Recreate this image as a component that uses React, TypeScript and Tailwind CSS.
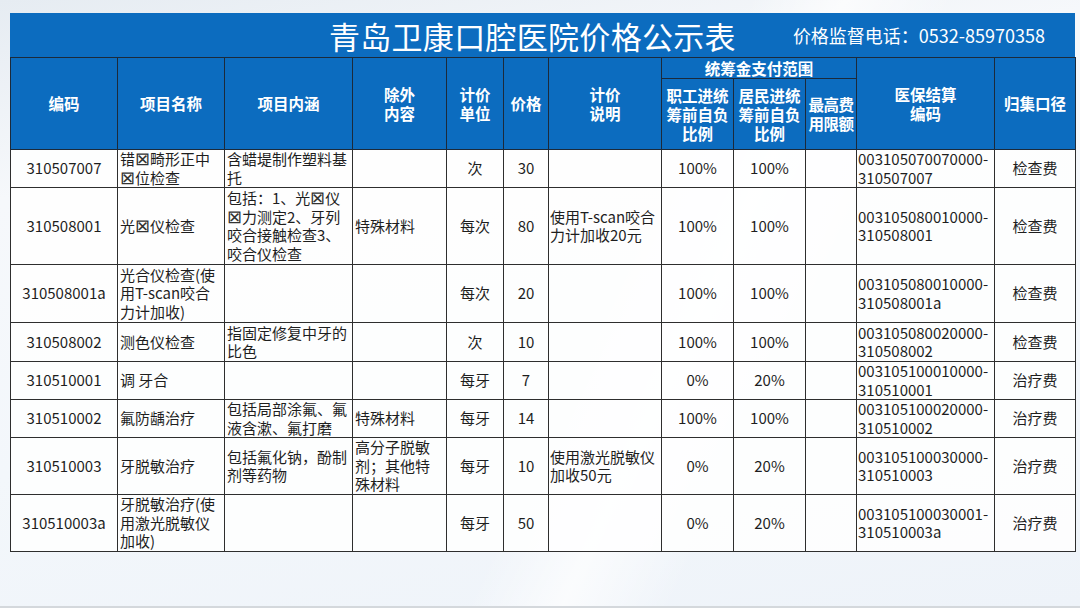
import React from 'react'

const colWidths = [107, 107, 128, 94, 57, 45, 113, 72, 72, 51, 138, 81]

type Row = {
  h: number
  code: string
  name: string[]
  content: string[]
  exclude: string[]
  unit: string
  price: string
  note: string[]
  staff: string
  resident: string
  cap: string
  ins: string[]
  cat: string
}

const rows: Row[] = [
  { h: 37, code: '310507007', name: ['错⊠畸形正中', '⊠位检查'], content: ['含蜡堤制作塑料基', '托'], exclude: [], unit: '次', price: '30', note: [], staff: '100%', resident: '100%', cap: '', ins: ['003105070070000-', '310507007'], cat: '检查费' },
  { h: 77, code: '310508001', name: ['光⊠仪检查'], content: ['包括：1、光⊠仪', '⊠力测定2、牙列', '咬合接触检查3、', '咬合仪检查'], exclude: ['特殊材料'], unit: '每次', price: '80', note: ['使用T-scan咬合', '力计加收20元'], staff: '100%', resident: '100%', cap: '', ins: ['003105080010000-', '310508001'], cat: '检查费' },
  { h: 58, code: '310508001a', name: ['光合仪检查(使', '用T-scan咬合', '力计加收)'], content: [], exclude: [], unit: '每次', price: '20', note: [], staff: '100%', resident: '100%', cap: '', ins: ['003105080010000-', '310508001a'], cat: '检查费' },
  { h: 39, code: '310508002', name: ['测色仪检查'], content: ['指固定修复中牙的', '比色'], exclude: [], unit: '次', price: '10', note: [], staff: '100%', resident: '100%', cap: '', ins: ['003105080020000-', '310508002'], cat: '检查费' },
  { h: 38, code: '310510001', name: ['调 牙合'], content: [], exclude: [], unit: '每牙', price: '7', note: [], staff: '0%', resident: '20%', cap: '', ins: ['003105100010000-', '310510001'], cat: '治疗费' },
  { h: 38, code: '310510002', name: ['氟防龋治疗'], content: ['包括局部涂氟、氟', '液含漱、氟打磨'], exclude: ['特殊材料'], unit: '每牙', price: '14', note: [], staff: '100%', resident: '100%', cap: '', ins: ['003105100020000-', '310510002'], cat: '治疗费' },
  { h: 57, code: '310510003', name: ['牙脱敏治疗'], content: ['包括氟化钠，酚制', '剂等药物'], exclude: ['高分子脱敏', '剂；其他特', '殊材料'], unit: '每牙', price: '10', note: ['使用激光脱敏仪', '加收50元'], staff: '0%', resident: '20%', cap: '', ins: ['003105100030000-', '310510003'], cat: '治疗费' },
  { h: 57, code: '310510003a', name: ['牙脱敏治疗(使', '用激光脱敏仪', '加收)'], content: [], exclude: [], unit: '每牙', price: '50', note: [], staff: '0%', resident: '20%', cap: '', ins: ['003105100030001-', '310510003a'], cat: '治疗费' },
]

// missing-glyph box shown in the source document
function Txt({ s }: { s: string }) {
  const parts = s.split('⊠')
  return (
    <>
      {parts.map((p, i) => (
        <React.Fragment key={i}>
          {i > 0 && <span className="inline-block w-[15px] text-center font-['DejaVu_Sans'] text-[18px] leading-[18px] font-light text-[#333]">⊠</span>}
          {p}
        </React.Fragment>
      ))}
    </>
  )
}

function Lines({ lines }: { lines: string[] }) {
  return (
    <>
      {lines.map((l, i) => (
        <div key={i} className="whitespace-nowrap">
          <Txt s={l} />
        </div>
      ))}
    </>
  )
}

const th = 'border border-[#1c2a3a] bg-[#0c6cbf] text-white font-bold text-[15.5px] leading-[19px] text-center align-middle'
const td = 'border border-[#2e2e2e] bg-white/85 text-[#1e1e1e] text-[15px] leading-[18.5px] align-middle'

function App() {
  return (
    <div className="w-[1080px] h-[608px] overflow-hidden relative font-['Noto_Sans_CJK_SC','Noto_Sans',sans-serif] bg-[linear-gradient(170deg,#e6ecf2_0%,#f6f8fb_25%,#f3f7fb_60%,#eef3f9_100%)] border-b-2 border-[#d4d8dc]">
      {/* soft diagonal light streak */}
      <div className="absolute inset-0 bg-[linear-gradient(115deg,transparent_55%,rgba(255,255,255,0.7)_62%,transparent_70%)] pointer-events-none" />
      <div className="relative pt-[13px] pl-[10px]">
        <div className="w-[1065px] h-[44px] bg-[#0c6cbf] flex items-center justify-end pr-[30px] text-white">
          <div className="text-[31px] leading-none mr-[57px] tracking-[0.3px]">青岛卫康口腔医院价格公示表</div>
          <div className="text-[18px] leading-none">价格监督电话：0532-85970358</div>
        </div>
        <table className="w-[1065px] table-fixed border-collapse">
          <colgroup>
            {colWidths.map((w, i) => (
              <col key={i} style={{ width: w }} />
            ))}
          </colgroup>
          <thead>
            <tr className="h-[21px]">
              <th rowSpan={2} className={th}>编码</th>
              <th rowSpan={2} className={th}>项目名称</th>
              <th rowSpan={2} className={th}>项目内涵</th>
              <th rowSpan={2} className={th}>除外<br />内容</th>
              <th rowSpan={2} className={th}>计价<br />单位</th>
              <th rowSpan={2} className={th}>价格</th>
              <th rowSpan={2} className={th}>计价<br />说明</th>
              <th colSpan={3} className={th}>统筹金支付范围</th>
              <th rowSpan={2} className={th}>医保结算<br />编码</th>
              <th rowSpan={2} className={th}>归集口径</th>
            </tr>
            <tr className="h-[71px]">
              <th className={th + ' px-0'}>职工进统<br />筹前自负<br />比例</th>
              <th className={th + ' px-0'}>居民进统<br />筹前自负<br />比例</th>
              <th className={th + ' px-0 tracking-[-0.5px]'}>最高费<br />用限额</th>
            </tr>
          </thead>
          <tbody>
            {rows.map((r) => (
              <tr key={r.code} style={{ height: r.h }}>
                <td className={td + ' text-center'}>{r.code}</td>
                <td className={td + ' pl-[2px]'}><Lines lines={r.name} /></td>
                <td className={td + ' pl-[2px]'}><Lines lines={r.content} /></td>
                <td className={td + ' pl-[2px]'}><Lines lines={r.exclude} /></td>
                <td className={td + ' text-center'}>{r.unit}</td>
                <td className={td + ' text-center'}>{r.price}</td>
                <td className={td + ' pl-[1px]'}><Lines lines={r.note} /></td>
                <td className={td + ' text-center'}>{r.staff}</td>
                <td className={td + ' text-center'}>{r.resident}</td>
                <td className={td + ' text-center'}>{r.cap}</td>
                <td className={td + ' pl-[1px]'}><Lines lines={r.ins} /></td>
                <td className={td + ' text-center'}>{r.cat}</td>
              </tr>
            ))}
          </tbody>
        </table>
      </div>
    </div>
  )
}

export default App
